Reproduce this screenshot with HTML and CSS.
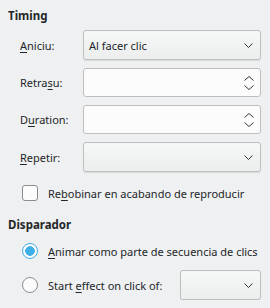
FILE: index.html
```html
<!DOCTYPE html>
<html lang="es">
<head>
  <meta charset="UTF-8" />
  <title>Timing</title>
  <link rel="stylesheet" href="styles.css">
</head>
<body>

<div class="section-title">Timing</div>

<div class="form">
  <label><u>A</u>niciu:</label>
  <div class="combo">
    <span>Al facer clic</span>
    <svg class="chev" width="9" height="5" viewBox="0 0 9 5"><path d="M0.5 0.5 L4.5 4.5 L8.5 0.5" /></svg>
  </div>

  <label>Retra<u>s</u>u:</label>
  <div class="spin">
    <span></span>
    <svg class="arrows" width="10" height="14" viewBox="0 0 10 14"><path d="M0.5 4.5 L5 0.5 L9.5 4.5" /><path d="M0.5 9.5 L5 13.5 L9.5 9.5" /></svg>
  </div>

  <label>D<u>u</u>ration:</label>
  <div class="spin">
    <span></span>
    <svg class="arrows" width="10" height="14" viewBox="0 0 10 14"><path d="M0.5 4.5 L5 0.5 L9.5 4.5" /><path d="M0.5 9.5 L5 13.5 L9.5 9.5" /></svg>
  </div>

  <label><u>R</u>epetir:</label>
  <div class="combo">
    <span></span>
    <svg class="chev" width="9" height="5" viewBox="0 0 9 5"><path d="M0.5 0.5 L4.5 4.5 L8.5 0.5" /></svg>
  </div>
</div>

<div class="check-row">
  <span class="checkbox"></span>
  <span>Re<u>b</u>obinar en acabando de reproducir</span>
</div>

<div class="section-title second">Disparador</div>

<div class="radio-row">
  <span class="radio checked"></span>
  <span><u>A</u>nimar como parte de secuencia de clics</span>
</div>

<div class="radio-row tall">
  <span class="radio"></span>
  <span class="grow">Start <u>e</u>ffect on click of:</span>
  <div class="combo small">
    <span></span>
    <svg class="chev" width="9" height="5" viewBox="0 0 9 5"><path d="M0.5 0.5 L4.5 4.5 L8.5 0.5" /></svg>
  </div>
</div>

</body>
</html>
```

FILE: styles.css
```css
body {
  margin: 0;
  padding: 0 9px 0 8px;
  font-family: 'Noto Sans', sans-serif;
  font-size: 11px;
  background: #eff0f1;
  color: #232629;
}

u {
  text-underline-offset: 2px;
}

.section-title {
  font-weight: bold;
  font-size: 11.5px;
  line-height: 16px;
  padding-top: 8px;
}

.section-title.second {
  margin-top: 16px;
  padding-top: 0;
}

.form {
  display: grid;
  grid-template-columns: 63px 1fr;
  row-gap: 8px;
  padding-left: 12px;
  margin-top: 6px;
  align-items: center;
}

.combo,
.spin {
  height: 30px;
  box-sizing: border-box;
  border: 1px solid #bcbec0;
  border-radius: 3px;
  display: flex;
  align-items: center;
  justify-content: space-between;
  padding: 0 7px 0 5px;
}

.combo {
  background: linear-gradient(#f6f7f7, #eceded);
  box-shadow: 0 1px 1px #0000001a;
}

.spin {
  background: #fcfcfc;
  height: 29px;
  padding-right: 6px;
}

.chev path,
.arrows path {
  fill: none;
  stroke: #31363b;
  stroke-width: 1;
}

.check-row {
  display: flex;
  align-items: center;
  gap: 10px;
  margin-top: 13px;
  padding-left: 14px;
  height: 16px;
}

.checkbox {
  width: 16px;
  height: 16px;
  box-sizing: border-box;
  border: 1px solid #8a8d90;
  border-radius: 3px;
  background: #fcfcfc;
}

.radio-row {
  display: flex;
  align-items: center;
  gap: 10px;
  padding-left: 14px;
  margin-top: 10px;
  height: 16px;
}

.radio-row.tall {
  height: 30px;
  margin-top: 11px;
}

.radio {
  width: 16px;
  height: 16px;
  box-sizing: border-box;
  border: 1px solid #8a8d90;
  border-radius: 50%;
  background: #fcfcfc;
  flex: none;
}

.radio.checked {
  border-color: #3daee9;
  background: radial-gradient(circle, #3daee9 0 4.5px, #fcfcfc 5px);
}

.grow {
  flex: 1;
}

.combo.small {
  width: 81px;
}
```
